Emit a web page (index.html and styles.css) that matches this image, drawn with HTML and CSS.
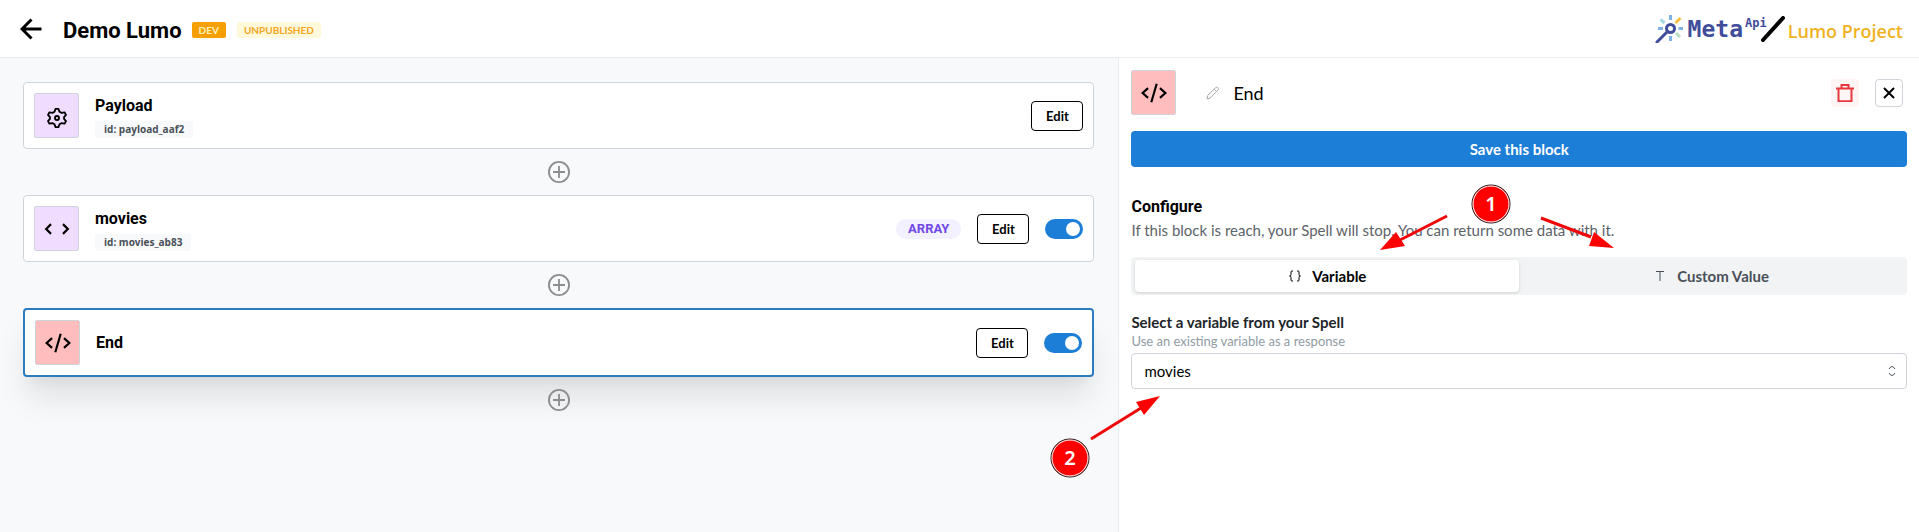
FILE: index.html
```html
<!DOCTYPE html>
<html lang="en">
<head>
<meta charset="utf-8">
<title>Demo Lumo</title>
<link rel="stylesheet" href="styles.css">
</head>
<body>
<svg class="sprite" aria-hidden="true">
  <symbol id="code" viewBox="0 0 24 24"><path d="M6.500 7.500 2 12l4.500 4.500M17.500 7.500 22 12l-4.500 4.500"/></symbol>
  <symbol id="end" viewBox="0 0 24 24"><path d="M6.500 7.500 1.500 12l5 4.500M17.500 7.500l5 4.500-5 4.500M14.500 3.500l-5 17"/></symbol>
  <symbol id="plus" viewBox="0 0 24 24"><circle cx="12" cy="12" r="11"/><path d="M12 5.500v13M5.500 12h13"/></symbol>
</svg>
<header class="topbar">
  <a class="back" href="#" aria-label="Back"><svg viewBox="0 0 22 22"><path d="M21.500 11H2M11.500 1.500 2 11l9.500 9.500"/></svg></a>
  <h1 class="title">Demo Lumo</h1>
  <span class="tag tag-dev">DEV</span>
  <span class="tag tag-draft">UNPUBLISHED</span>
  <div class="brand">
    <svg class="wand" viewBox="0 0 28 28">
      <g fill="none" stroke-width="3">
        <path stroke="#7fb0e6" d="M15.500 0v5M15.500 21v5M3 13.500h5M23.500 13.500H28"/>
        <path stroke="#a5dbe3" d="M5.500 4.500 9.500 8"/><path stroke="#b9dfc4" d="m21 18 4 4"/>
        <path stroke="#f6c23e" d="m20.500 8 5-5"/>
        <path stroke="#3f4d9b" stroke-linecap="round" d="m2 27 10.500-10.500"/>
        <circle stroke="#3f4d9b" cx="15.500" cy="13.500" r="4"/>
      </g>
    </svg>
    <span class="meta">Meta</span><span class="api">Api</span>
    <svg class="slash" viewBox="0 0 24 26"><path d="M2 24 22 2"/></svg>
    <span class="project">Lumo Project</span>
  </div>
</header>
<main class="workspace">
  <section class="flow" aria-label="Blocks">
    <article class="card">
      <span class="tile purple"><svg class="gear" viewBox="0 0 24 24"><path d="M9.300 5.100 10.400 2h3.200l1.100 3.100 2.300 1.300 3.200-.6 1.600 2.800-2.100 2.500v1.800l2.100 2.500-1.600 2.800-3.200-.6-2.300 1.300L13.600 22h-3.200l-1.100-3.100L7 17.600l-3.200.6-1.600-2.800 2.100-2.500v-1.800L2.200 8.600l1.600-2.800 3.200.6z"/><circle cx="12" cy="12" r="2.200"/></svg></span>
      <div class="info"><h2>Payload</h2><span class="ident">id: payload_aaf2</span></div>
      <button class="edit" type="button">Edit</button>
    </article>
    <button class="add" type="button" aria-label="Add block"><svg><use href="#plus"/></svg></button>
    <article class="card">
      <span class="tile purple"><svg><use href="#code"/></svg></span>
      <div class="info"><h2>movies</h2><span class="ident">id: movies_ab83</span></div>
      <span class="type">ARRAY</span>
      <button class="edit" type="button">Edit</button>
      <input class="switch" type="checkbox" checked aria-label="Enable movies">
    </article>
    <button class="add" type="button" aria-label="Add block"><svg><use href="#plus"/></svg></button>
    <article class="card selected">
      <span class="tile red"><svg><use href="#end"/></svg></span>
      <div class="info"><h2>End</h2></div>
      <button class="edit" type="button">Edit</button>
      <input class="switch" type="checkbox" checked aria-label="Enable End">
    </article>
    <button class="add" type="button" aria-label="Add block"><svg><use href="#plus"/></svg></button>
  </section>
  <aside class="panel">
    <div class="panel-head">
      <span class="tile red"><svg><use href="#end"/></svg></span>
      <label class="name"><svg viewBox="0 0 14 14"><path d="M1 13l.8-3.600L9.500 1.700q1.200-1.200 2.400 0t0 2.400L4.300 11.900zM8 3.200 10.500 5.700"/></svg><input type="text" value="End" aria-label="Block name"></label>
      <button class="square delete" type="button" aria-label="Delete"><svg viewBox="0 0 18 18"><path d="M0 4.500h18M2.500 4.500v12.700h13V4.500M5.500 4.500V1h7v3.500"/></svg></button>
      <button class="square close" type="button" aria-label="Close"><svg viewBox="0 0 12 12"><path d="m1 1 10 10M11 1 1 11"/></svg></button>
    </div>
    <button class="save" type="button">Save this block</button>
    <h2 class="section">Configure</h2>
    <p class="hint">If this block is reach, your Spell will stop. You can return some data with it.</p>
    <div class="segments" role="radiogroup" aria-label="Response source">
      <label><input type="radio" name="source" checked><svg viewBox="0 0 14 14"><path d="M5 2H4q-1 0-1 1v2.500Q3 7 1.500 7 3 7 3 8.500V11q0 1 1 1h1M9 2h1q1 0 1 1v2.500Q11 7 12.500 7 11 7 11 8.500V11q0 1-1 1H9"/></svg>Variable</label>
      <label><input type="radio" name="source"><svg viewBox="0 0 14 14"><path d="M3 2.500h8M7 2.500V12"/></svg>Custom Value</label>
    </div>
    <label class="field-label" for="variable">Select a variable from your Spell</label>
    <p class="field-hint">Use an existing variable as a response</p>
    <div class="select"><select id="variable"><option>movies</option></select><svg viewBox="0 0 8 12"><path d="M1 4q3-5 6 0M1 8q3 5 6 0"/></svg></div>
  </aside>
</main>
<svg class="callouts" aria-hidden="true" width="660" height="300" viewBox="1040 180 660 300">
  <g stroke="#f00808" stroke-width="3"><path d="M1447 216 1400 240M1541 218l50 19M1091 439l50-31"/></g>
  <g fill="#f00"><path d="m1380 250 16-18 9 14zM1614 248l-20-16-5 14zM1160 396l-24 6 8 13z"/></g>
  <g fill="#f00" stroke="#111"><circle cx="1491" cy="204" r="19"/><circle cx="1070" cy="458" r="19"/></g>
  <g fill="none" stroke="#fff"><circle cx="1491" cy="204" r="18"/><circle cx="1070" cy="458" r="18"/></g>
  <g class="numbers"><text x="1491" y="211">1</text><text x="1070" y="465">2</text></g>
</svg>
</body>
</html>
```
FILE: styles.css
```css
* { box-sizing: border-box; }
body {
  margin: 0;
  min-height: 100vh;
  position: relative;
  display: flex;
  flex-direction: column;
  background: #fff;
  color: #000;
  font-family: Lato, "Open Sans", sans-serif;
}
h1, h2, p { margin: 0; }
button, input, select { font: inherit; color: inherit; }
button { padding: 0; cursor: pointer; }
svg { display: block; fill: none; stroke: currentColor; }
.sprite { position: absolute; width: 0; height: 0; }

.topbar {
  display: flex;
  align-items: center;
  height: 58px;
  padding: 0 16px 0 20px;
  border-bottom: 1px solid #e9ecef;
}
.back { color: #000; }
.back svg { width: 22px; height: 22px; stroke-width: 3; }
.title {
  margin: 4px 10px 0 21px;
  font: 700 22px/28px Roboto, sans-serif;
}
.tag {
  height: 16px;
  margin: 2px 11px 0 0;
  padding: 0 7px;
  border-radius: 2px;
  font-size: 10px;
  font-weight: 700;
  line-height: 17px;
}
.tag-dev { background: #f59f00; color: #fff3bf; }
.tag-draft { background: #fff9db; color: #f5a61d; }
.brand { display: flex; align-items: center; margin-left: auto; }
.wand { width: 28px; height: 28px; margin-right: 5px; }
.meta { color: #3f4d9b; font: 700 23px/28px "DejaVu Sans Mono", monospace; }
.api { align-self: flex-start; margin-left: 2px; color: #3f4d9b; font: 700 12px/16px "DejaVu Sans Mono", monospace; }
.slash { width: 24px; height: 26px; margin: 0 3px 0 -6px; color: #000; stroke-width: 4; stroke-linecap: round; }
.project { margin-top: 4px; color: #f0b223; font: 600 18px/24px "Open Sans", sans-serif; }

.workspace { flex: 1; display: grid; grid-template-columns: 7fr 5fr; }
.flow {
  display: flex;
  flex-direction: column;
  padding: 24px 24px 24px 23px;
  background: #f7f9fb;
  border-right: 1px solid #e9ecef;
}
.card {
  display: flex;
  align-items: center;
  gap: 16px;
  padding: 10px;
  background: #fff;
  border: 1px solid #ced4da;
  border-radius: 4px;
}
.card.selected {
  border: 2px solid #2b7bc0;
  box-shadow: 0 24px 32px -4px rgba(0, 0, 0, .1), 0 10px 10px -5px rgba(0, 0, 0, .04);
}
.tile {
  display: grid;
  place-items: center;
  width: 45px;
  height: 45px;
  border: 1px solid #ced4da;
  border-radius: 2px;
}
.tile svg { width: 26px; height: 26px; stroke-width: 2; }
.tile .gear { width: 22px; height: 22px; margin-top: 4px; stroke-linejoin: round; }
.purple { background: #f0dcff; }
.red { background: #ffbdbd; }
.info { flex: 1; display: flex; flex-direction: column; align-items: flex-start; }
.info h2, .section { font: 700 16px/24px Roboto, sans-serif; }
.ident {
  height: 17px;
  margin-top: 3px;
  padding: 0 9px;
  border-radius: 2px;
  background: #f8f9fa;
  color: #495057;
  font: 700 10px/17px "Open Sans", sans-serif;
}
.edit {
  width: 52px;
  height: 30px;
  border: 1px solid #000;
  border-radius: 4px;
  background: #fff;
  font-size: 13px;
  font-weight: 700;
}
.type {
  padding: 0 12px;
  border-radius: 10px;
  background: #f3f0ff;
  color: #7048e8;
  font: 700 13px/20px Roboto, sans-serif;
}
.switch {
  appearance: none;
  width: 38px;
  height: 20px;
  margin: 0;
  padding: 3px;
  border-radius: 10px;
  background: #adb5bd;
}
.switch::before {
  content: "";
  display: block;
  width: 14px;
  height: 14px;
  border-radius: 50%;
  background: #fff;
}
.switch:checked { background: #1c7ed6; }
.switch:checked::before { margin-left: auto; }
.add {
  display: grid;
  place-items: center;
  align-self: center;
  position: relative;
  width: 46px;
  height: 46px;
  border: 0;
  background: none;
}
.add svg { width: 22px; height: 22px; stroke: #8b8d90; stroke-width: 2; }

.panel { display: flex; flex-direction: column; padding: 12px; }
.panel-head { display: flex; align-items: center; gap: 16px; padding-right: 4px; }
.name { flex: 1; display: flex; align-items: center; gap: 13px; padding-left: 14px; }
.name svg { width: 14px; height: 14px; color: #a8a8a8; }
.name input { flex: 1; min-width: 0; padding: 0; border: 0; outline: 0; font-size: 18px; }
.square {
  display: grid;
  place-items: center;
  width: 28px;
  height: 28px;
  border: 1px solid transparent;
  border-radius: 4px;
}
.delete { background: #fff5f5; color: #e5383f; }
.delete svg { width: 18px; height: 18px; stroke-width: 2; }
.close { background: #fff; border-color: #ced4da; }
.close svg { width: 12px; height: 12px; stroke-width: 2; }
.save {
  height: 36px;
  margin: 16px 0 28px;
  border: 0;
  border-radius: 4px;
  background: #1c7ed6;
  color: #fff;
  font-size: 15px;
  font-weight: 700;
}
.hint { color: #5c636a; font-size: 15px; line-height: 22px; }
.segments {
  display: grid;
  grid-template-columns: 1fr 1fr;
  margin: 16px 0;
  padding: 3px 4px;
  border-radius: 4px;
  background: #f1f3f5;
}
.segments label {
  display: flex;
  align-items: center;
  justify-content: center;
  gap: 10px;
  height: 32px;
  border-radius: 4px;
  color: #495057;
  font-size: 15px;
  font-weight: 700;
}
.segments label:has(:checked) { background: #fff; color: #000; box-shadow: 0 1px 3px rgba(0, 0, 0, .15); }
.segments input { position: absolute; opacity: 0; }
.segments svg { width: 14px; height: 14px; }
.field-label { color: #212529; font-size: 15px; font-weight: 700; line-height: 22px; }
.field-hint { margin-bottom: 4px; color: #909ba5; font-size: 13px; line-height: 16px; }
.select { position: relative; }
.select select {
  appearance: none;
  display: block;
  width: 100%;
  height: 36px;
  padding: 0 12px;
  border: 1px solid #ced4da;
  border-radius: 4px;
  background: #fff;
  font-size: 15px;
}
.select svg { position: absolute; top: 12px; right: 11px; width: 8px; height: 12px; color: #495057; pointer-events: none; }

.callouts { position: absolute; left: 1040px; top: 180px; stroke: none; pointer-events: none; }
.numbers { fill: #fff; font: 600 20px "Noto Sans", sans-serif; text-anchor: middle; }
```
